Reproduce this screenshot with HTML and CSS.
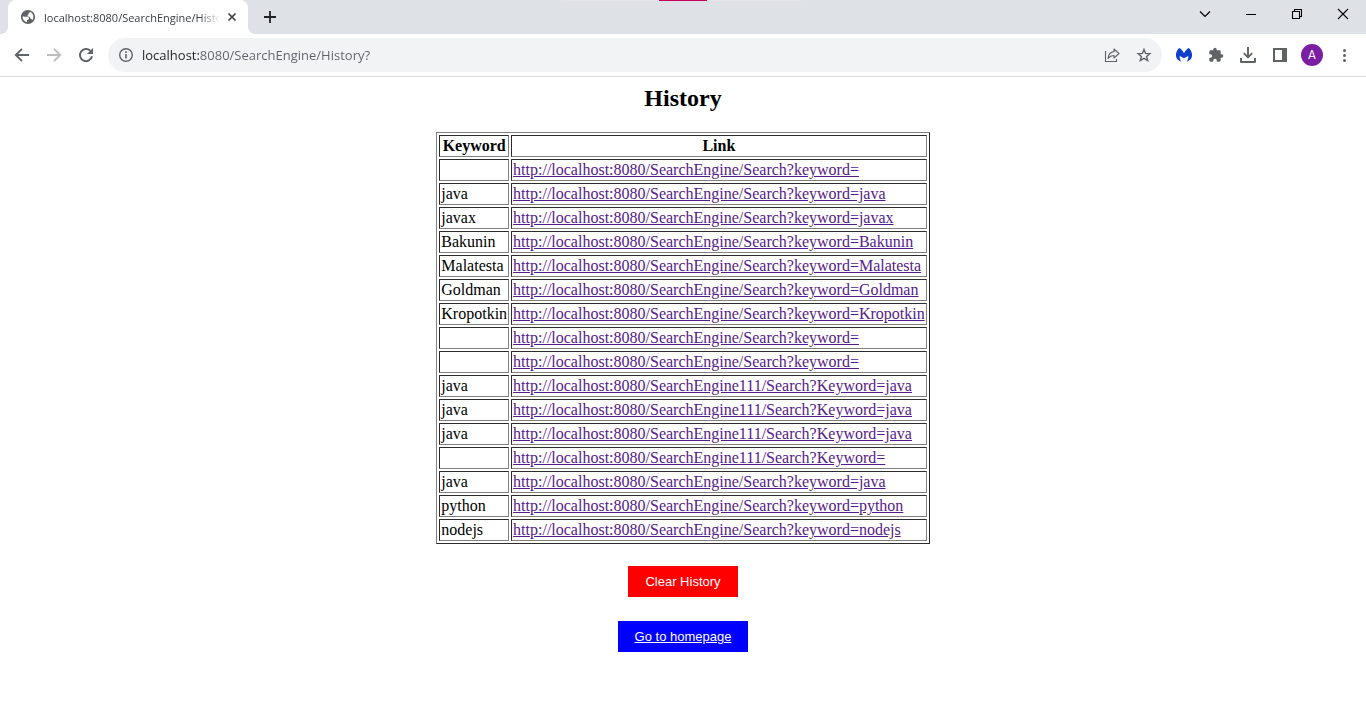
FILE: index.html
```html
<!DOCTYPE html>
<html lang="en">
<head>
<meta charset="utf-8">
<title>History</title>
<link rel="stylesheet" href="styles.css">
</head>
<body>
<header class="browser">
  <div class="tab-strip">
    <div class="tab">
      <svg class="favicon" viewBox="0 0 24 24" width="16" height="16"><path d="M12 1.500C6.200 1.500 1.500 6.200 1.500 12S6.200 22.500 12 22.500 22.500 17.800 22.500 12 17.800 1.500 12 1.500zm-1.500 18.400c-3.700-.7-6.500-3.900-6.500-7.900 0-.4 0-.8.100-1.200L7 11.500h4c1.500 0 2.500 1 2.500 2.500s-1 2-2.500 2.500c-.5.300-.5 2-.5 3.400zm7.900-3.200c-.3-1-.9-1.700-1.900-1.700-.8-.2-.8-1.300-1-2-.3-1.200-1.300-1.500-2.500-1.500-1.500 0-2-1-1.500-2.200.5-1 1.500-1 1.500-2 0-1.300 1.500-1 2-3.100 3 1.200 5 4.200 5 7.800 0 1.700-.6 3.400-1.600 4.700z" fill="#5f6368"/></svg>
      <span class="tab-title">localhost:8080/SearchEngine/History?</span>
      <button class="tab-close" aria-label="Close tab"><svg viewBox="0 0 16 16" width="16" height="16"><path d="M4.500 4.500l7 7m0-7l-7 7" stroke="#3c4043" stroke-width="1.700" fill="none"/></svg></button>
    </div>
    <button class="icon-button new-tab" aria-label="New tab"><svg viewBox="0 0 16 16" width="16" height="16"><path d="M8 2v12M2 8h12" stroke="#202124" stroke-width="1.800"/></svg></button>
    <div class="share-bar"></div>
    <div class="window-controls">
      <button class="window-button" aria-label="Search tabs"><svg viewBox="0 0 12 12" width="12" height="12"><path d="M1 3.500l5 5 5-5" stroke="#000" stroke-width="1.200" fill="none"/></svg></button>
      <button class="window-button" aria-label="Minimize"><svg viewBox="0 0 12 12" width="12" height="12"><path d="M1 6.500h10" stroke="#000"/></svg></button>
      <button class="window-button" aria-label="Restore"><svg viewBox="0 0 12 12" width="12" height="12"><path d="M1.500 3.500h7v7h-7zM3.500 3.500v-2h7v7h-2" stroke="#000" fill="none" stroke-width="1.100"/></svg></button>
      <button class="window-button" aria-label="Close"><svg viewBox="0 0 12 12" width="12" height="12"><path d="M1 1l10 10M11 1L1 11" stroke="#000" stroke-width="1.100"/></svg></button>
    </div>
  </div>
  <div class="toolbar">
    <button class="icon-button" aria-label="Back"><svg viewBox="0 0 16 16" width="16" height="16"><path d="M15 8H2M8 1.800L1.800 8L8 14.200" stroke="#5f6368" stroke-width="1.900" fill="none"/></svg></button>
    <button class="icon-button" aria-label="Forward"><svg viewBox="0 0 16 16" width="16" height="16"><path d="M1 8h13M8 1.800L14.200 8L8 14.200" stroke="#babcbe" stroke-width="1.900" fill="none"/></svg></button>
    <button class="icon-button" aria-label="Reload"><svg viewBox="0 0 16 16" width="16" height="16"><path d="M14 9.300A6.100 6.100 0 1 1 12.300 3.700" stroke="#5f6368" stroke-width="2" fill="none"/><path d="M15 1v6H9z" fill="#5f6368"/></svg></button>
    <div class="omnibox">
      <button class="icon-button" aria-label="Site information"><svg viewBox="0 0 16 16" width="16" height="16"><circle cx="8" cy="8" r="6.300" stroke="#5f6368" stroke-width="1.400" fill="none"/><path d="M8 7v4.500M8 4.300v1.600" stroke="#5f6368" stroke-width="1.600"/></svg></button>
      <input class="address" type="text" aria-label="Address" value="localhost:8080/SearchEngine/History?">
      <button class="icon-button" aria-label="Share"><svg viewBox="0 0 16 16" width="16" height="16"><path d="M1.500 4v10.500h11V12" stroke="#5f6368" stroke-width="1.100" fill="none"/><path d="M10 2l5 4.500-5 4.500V8.500C7.500 8.500 5.500 9.500 4 11.500C4.300 7.500 6.500 5 10 4.600z" stroke="#5f6368" stroke-width="1.100" fill="none" stroke-linejoin="round"/></svg></button>
      <button class="icon-button" aria-label="Bookmark"><svg viewBox="0 0 16 16" width="16" height="16"><path d="M8 2.400l1.600 4 4.300.3-3.300 2.700 1.100 4.100L8 11.300l-3.700 2.200 1.100-4.100-3.300-2.700 4.300-.3z" stroke="#5f6368" stroke-width="1.400" fill="none"/></svg></button>
    </div>
    <button class="icon-button" aria-label="Malwarebytes"><svg viewBox="0 0 16 16" width="16" height="16"><path d="M3.200 1C5 1.800 6.900 3.800 8 6.200C9.100 3.800 11 1.800 12.800 1C15 3 16.300 6 16 9C15.700 11.700 13.800 13.900 10.600 14.700C11.800 13.300 12.500 11.300 12.300 9.200C10.600 9.500 9 10.500 8 11.600C7 10.500 5.400 9.500 3.700 9.200C3.500 11.300 4.200 13.300 5.400 14.700C2.200 13.900 .3 11.700 0 9C-.3 6 1 3 3.200 1Z" fill="#0d3ecc"/></svg></button>
    <button class="icon-button" aria-label="Extensions"><svg viewBox="0 0 24 24" width="16" height="16"><path d="M20.500 11H19V7c0-1.100-.9-2-2-2h-4V3.500a2.500 2.500 0 0 0-5 0V5H4c-1.100 0-2 .9-2 2v3.800h1.500a2.700 2.700 0 0 1 0 5.400H2V20c0 1.100.9 2 2 2h3.800v-1.500a2.700 2.700 0 0 1 5.400 0V22H17c1.100 0 2-.9 2-2v-4h1.500a2.500 2.500 0 0 0 0-5z" fill="#5f6368"/></svg></button>
    <button class="icon-button" aria-label="Downloads"><svg viewBox="0 0 16 16" width="16" height="16"><path d="M8 0v10M3.800 6.200L8 10.400l4.200-4.200M1 11v4h14v-4" stroke="#5f6368" stroke-width="1.900" fill="none" stroke-linejoin="round"/></svg></button>
    <button class="icon-button" aria-label="Side panel"><svg viewBox="0 0 16 16" width="16" height="16"><path d="M1 1h14v14H1zM3 3v10h7V3z" fill="#5f6368" fill-rule="evenodd"/></svg></button>
    <button class="icon-button avatar" aria-label="Profile">A</button>
    <button class="icon-button" aria-label="Menu"><svg viewBox="0 0 16 16" width="16" height="16"><g fill="#5f6368"><circle cx="8.500" cy="3.500" r="1.500"/><circle cx="8.500" cy="8.500" r="1.500"/><circle cx="8.500" cy="13.500" r="1.500"/></g></svg></button>
  </div>
</header>
<main class="page">
  <h2 class="heading">History</h2>
  <table class="history">
    <thead><tr><th scope="col">Keyword</th><th scope="col">Link</th></tr></thead>
    <tbody>
      <tr><td></td><td><a href="#">http://localhost:8080/SearchEngine/Search?keyword=</a></td></tr>
      <tr><td>java</td><td><a href="#">http://localhost:8080/SearchEngine/Search?keyword=java</a></td></tr>
      <tr><td>javax</td><td><a href="#">http://localhost:8080/SearchEngine/Search?keyword=javax</a></td></tr>
      <tr><td>Bakunin</td><td><a href="#">http://localhost:8080/SearchEngine/Search?keyword=Bakunin</a></td></tr>
      <tr><td>Malatesta</td><td><a href="#">http://localhost:8080/SearchEngine/Search?keyword=Malatesta</a></td></tr>
      <tr><td>Goldman</td><td><a href="#">http://localhost:8080/SearchEngine/Search?keyword=Goldman</a></td></tr>
      <tr><td>Kropotkin</td><td><a href="#">http://localhost:8080/SearchEngine/Search?keyword=Kropotkin</a></td></tr>
      <tr><td></td><td><a href="#">http://localhost:8080/SearchEngine/Search?keyword=</a></td></tr>
      <tr><td></td><td><a href="#">http://localhost:8080/SearchEngine/Search?keyword=</a></td></tr>
      <tr><td>java</td><td><a href="#">http://localhost:8080/SearchEngine111/Search?Keyword=java</a></td></tr>
      <tr><td>java</td><td><a href="#">http://localhost:8080/SearchEngine111/Search?Keyword=java</a></td></tr>
      <tr><td>java</td><td><a href="#">http://localhost:8080/SearchEngine111/Search?Keyword=java</a></td></tr>
      <tr><td></td><td><a href="#">http://localhost:8080/SearchEngine111/Search?Keyword=</a></td></tr>
      <tr><td>java</td><td><a href="#">http://localhost:8080/SearchEngine/Search?keyword=java</a></td></tr>
      <tr><td>python</td><td><a href="#">http://localhost:8080/SearchEngine/Search?keyword=python</a></td></tr>
      <tr><td>nodejs</td><td><a href="#">http://localhost:8080/SearchEngine/Search?keyword=nodejs</a></td></tr>
    </tbody>
  </table>
  <div class="actions">
    <button class="action clear">Clear History</button>
    <a class="action home" href="#">Go to homepage</a>
  </div>
</main>
</body>
</html>
```
FILE: styles.css
```css
* {
  box-sizing: border-box;
}

body {
  margin: 0;
  background: #fff;
  color: #000;
  font-family: "Liberation Serif", "Times New Roman", serif;
  font-size: 16px;
}

button {
  padding: 0;
  border: 0;
  background: none;
}

svg {
  display: block;
}

.browser {
  font-family: "Open Sans", "Noto Sans", sans-serif;
  border-bottom: 1px solid #dadce0;
}

.tab-strip {
  position: relative;
  display: flex;
  height: 34px;
  padding-left: 8px;
  background: #dee1e6;
}

.tab {
  position: relative;
  display: flex;
  align-items: center;
  gap: 8px;
  width: 240px;
  padding: 0 8px 0 12px;
  background: #fff;
  border-radius: 8px 8px 0 0;
}

.tab::before,
.tab::after {
  content: "";
  position: absolute;
  bottom: 0;
  width: 8px;
  height: 8px;
}

.tab::before {
  right: 100%;
  background: radial-gradient(circle at 0 0, transparent 8px, #fff 8px);
}

.tab::after {
  left: 100%;
  background: radial-gradient(circle at 100% 0, transparent 8px, #fff 8px);
}

.favicon {
  flex: none;
}

.tab-title {
  flex: 1;
  overflow: hidden;
  white-space: nowrap;
  font-size: 11px;
  color: #3c4043;
  mask-image: linear-gradient(90deg, #000 88%, transparent);
}

.tab-close {
  margin-left: -4px;
}

.icon-button {
  display: flex;
  flex: none;
  align-items: center;
  justify-content: center;
  width: 32px;
}

.new-tab {
  margin-left: 6px;
}

.share-bar {
  position: absolute;
  top: 0;
  left: 50%;
  width: 240px;
  height: 1px;
  margin-left: -120px;
  background: linear-gradient(90deg, #e4e4e6 96px, #c9005b 96px 144px, #e4e4e6 144px);
}

.window-controls {
  display: flex;
  margin-left: auto;
}

.window-button {
  display: flex;
  align-items: center;
  justify-content: center;
  width: 46px;
  height: 28px;
}

.toolbar {
  display: flex;
  align-items: center;
  height: 42px;
  padding: 0 6px;
}

.omnibox {
  display: flex;
  flex: 1;
  align-items: center;
  height: 34px;
  margin: 0 6px;
  padding: 0 2px;
  background: #f1f3f4;
  border-radius: 17px;
}

.address {
  flex: 1;
  min-width: 0;
  padding: 0;
  border: 0;
  outline: 0;
  font-family: inherit;
  font-size: 13px;
  color: #5f6368;
  background: linear-gradient(90deg, #202124 58px, #5f6368 58px);
  background-clip: text;
  -webkit-text-fill-color: transparent;
}

.avatar {
  width: 22px;
  height: 22px;
  margin: 0 5px;
  border-radius: 50%;
  background: #7b1fa2;
  color: #fff;
  font-family: Roboto, sans-serif;
  font-size: 12px;
}

.page {
  display: flex;
  flex-direction: column;
  align-items: center;
  padding: 8px;
}

.heading {
  margin: 0 0 20px;
  font-size: 24px;
  line-height: 27px;
}

.history {
  border: 1px outset #808080;
  border-spacing: 2px;
  line-height: 18px;
}

.history th,
.history td {
  height: 22px;
  padding: 1px;
  border: 1px inset #808080;
}

.history a {
  color: #551a8b;
}

.actions {
  display: flex;
  flex-direction: column;
  align-items: center;
  gap: 24px;
  padding-top: 22px;
}

.action {
  padding: 8px 17px;
  color: #fff;
  font-family: "Liberation Sans", Arial, sans-serif;
  font-size: 13px;
  line-height: 15px;
}

.clear {
  background: #f00;
}

.home {
  background: #00f;
}
```
